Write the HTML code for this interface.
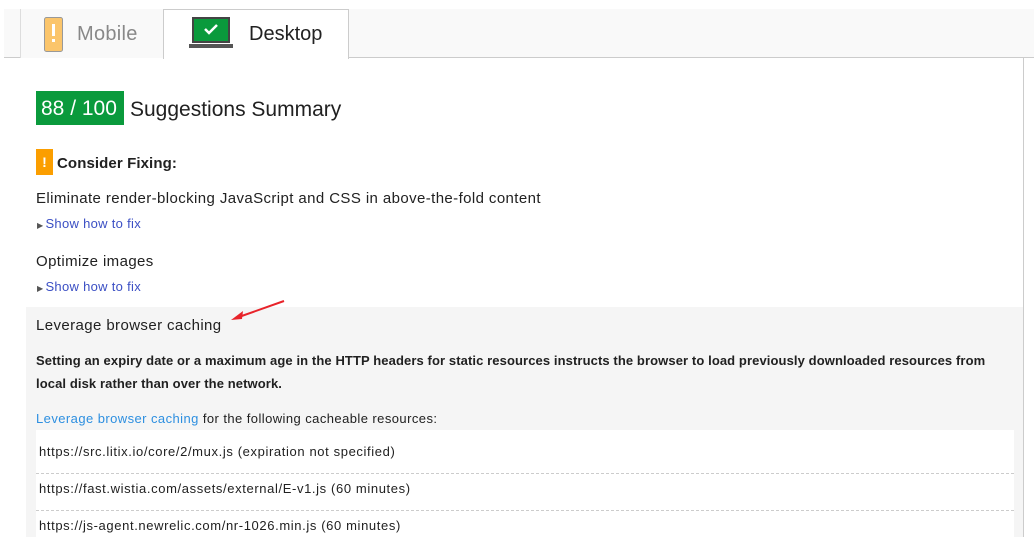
<!DOCTYPE html>
<html><head><meta charset="utf-8"><style>
*{margin:0;padding:0;box-sizing:border-box}
body{width:1034px;height:537px;overflow:hidden;background:#fff;font-family:"Liberation Sans",sans-serif;color:#212121;position:relative}
.abs{position:absolute;white-space:nowrap}
.link{color:#3b4fc4}
.t15{font-size:15px;letter-spacing:0.4px}
.url{font-size:13px;letter-spacing:0.62px}
</style></head><body>
<div class="abs" style="left:4px;top:9px;width:1030px;height:49px;background:#f9f9f9;border-bottom:1px solid #ccc"></div>
<div class="abs" style="left:20px;top:9px;width:144px;height:49px;border-left:1px solid #ddd;background:#f9f9f9"></div>
<div class="abs" style="left:163px;top:9px;width:186px;height:50px;background:#fff;border:1px solid #ccc;border-bottom:none"></div>
<svg class="abs" style="left:44px;top:17px" width="20" height="36"><rect x="0.5" y="0.5" width="18" height="34" rx="2" fill="#fbc56b" stroke="#999"/><rect x="8" y="7" width="3" height="12" fill="#fff"/><rect x="8" y="22" width="3" height="3" fill="#fff"/></svg>
<div class="abs" style="left:77px;top:23px;font-size:20px;color:#888;letter-spacing:0.3px">Mobile</div>
<svg class="abs" style="left:187px;top:17px" width="48" height="32"><rect x="6" y="1" width="36" height="24" fill="#0a9a3c" stroke="#444" stroke-width="2"/><path d="M18 12l4 4 8-8" stroke="#fff" stroke-width="2.5" fill="none"/><path d="M2 27h44v4H2z" fill="#555"/></svg>
<div class="abs" style="left:249px;top:23px;font-size:20px;color:#222">Desktop</div>
<div class="abs" style="left:1023px;top:58px;width:1px;height:479px;background:#ccc"></div>
<div class="abs" style="left:36px;top:91px;width:88px;height:34px;background:#0a9a3c;color:#fff;font-size:21px;line-height:36px;padding-left:5px">88 / 100</div>
<div class="abs" style="left:130px;top:98px;font-size:21px">Suggestions Summary</div>
<div class="abs" style="left:36px;top:149px;width:17px;height:26px;background:#fb9e00;color:#fff;font-weight:bold;font-size:14px;text-align:center;line-height:26px">!</div>
<div class="abs" style="left:57px;top:155px;font-size:15px;font-weight:bold;letter-spacing:0.1px">Consider Fixing:</div>
<div class="abs t15" style="left:36px;top:190px">Eliminate render-blocking JavaScript and CSS in above-the-fold content</div>
<div class="abs" style="left:37px;top:216px;font-size:13px;letter-spacing:0.3px"><span style="font-size:8px;color:#555;margin-right:2px">▶</span><span class="link">Show how to fix</span></div>
<div class="abs t15" style="left:36px;top:253px">Optimize images</div>
<div class="abs" style="left:37px;top:279px;font-size:13px;letter-spacing:0.3px"><span style="font-size:8px;color:#555;margin-right:2px">▶</span><span class="link">Show how to fix</span></div>
<div class="abs" style="left:26px;top:307px;width:997px;height:230px;background:#f5f5f5"></div>
<div class="abs t15" style="left:36px;top:317px">Leverage browser caching</div>
<svg class="abs" style="left:228px;top:298px" width="60" height="26"><path d="M56 3L8 20" stroke="#e8232a" stroke-width="2"/><path d="M3 22l12-9-1 8z" fill="#e8232a"/></svg>
<div class="abs" style="left:36px;top:349px;font-size:13px;font-weight:bold;line-height:23px;letter-spacing:0.1px">Setting an expiry date or a maximum age in the HTTP headers for static resources instructs the browser to load previously downloaded resources from<br>local disk rather than over the network.</div>
<div class="abs" style="left:36px;top:411px;font-size:13px;letter-spacing:0.43px"><span style="color:#2d8fe0">Leverage browser caching</span> for the following cacheable resources:</div>
<div class="abs" style="left:36px;top:430px;width:978px;height:107px;background:#fff"></div>
<div class="abs url" style="left:39px;top:444px">https://src.litix.io/core/2/mux.js (expiration not specified)</div>
<div class="abs" style="left:36px;top:473px;width:978px;border-top:1px dashed #ccc"></div>
<div class="abs url" style="left:39px;top:481px">https://fast.wistia.com/assets/external/E-v1.js (60 minutes)</div>
<div class="abs" style="left:36px;top:510px;width:978px;border-top:1px dashed #ccc"></div>
<div class="abs url" style="left:39px;top:518px">https://js-agent.newrelic.com/nr-1026.min.js (60 minutes)</div>
</body></html>
